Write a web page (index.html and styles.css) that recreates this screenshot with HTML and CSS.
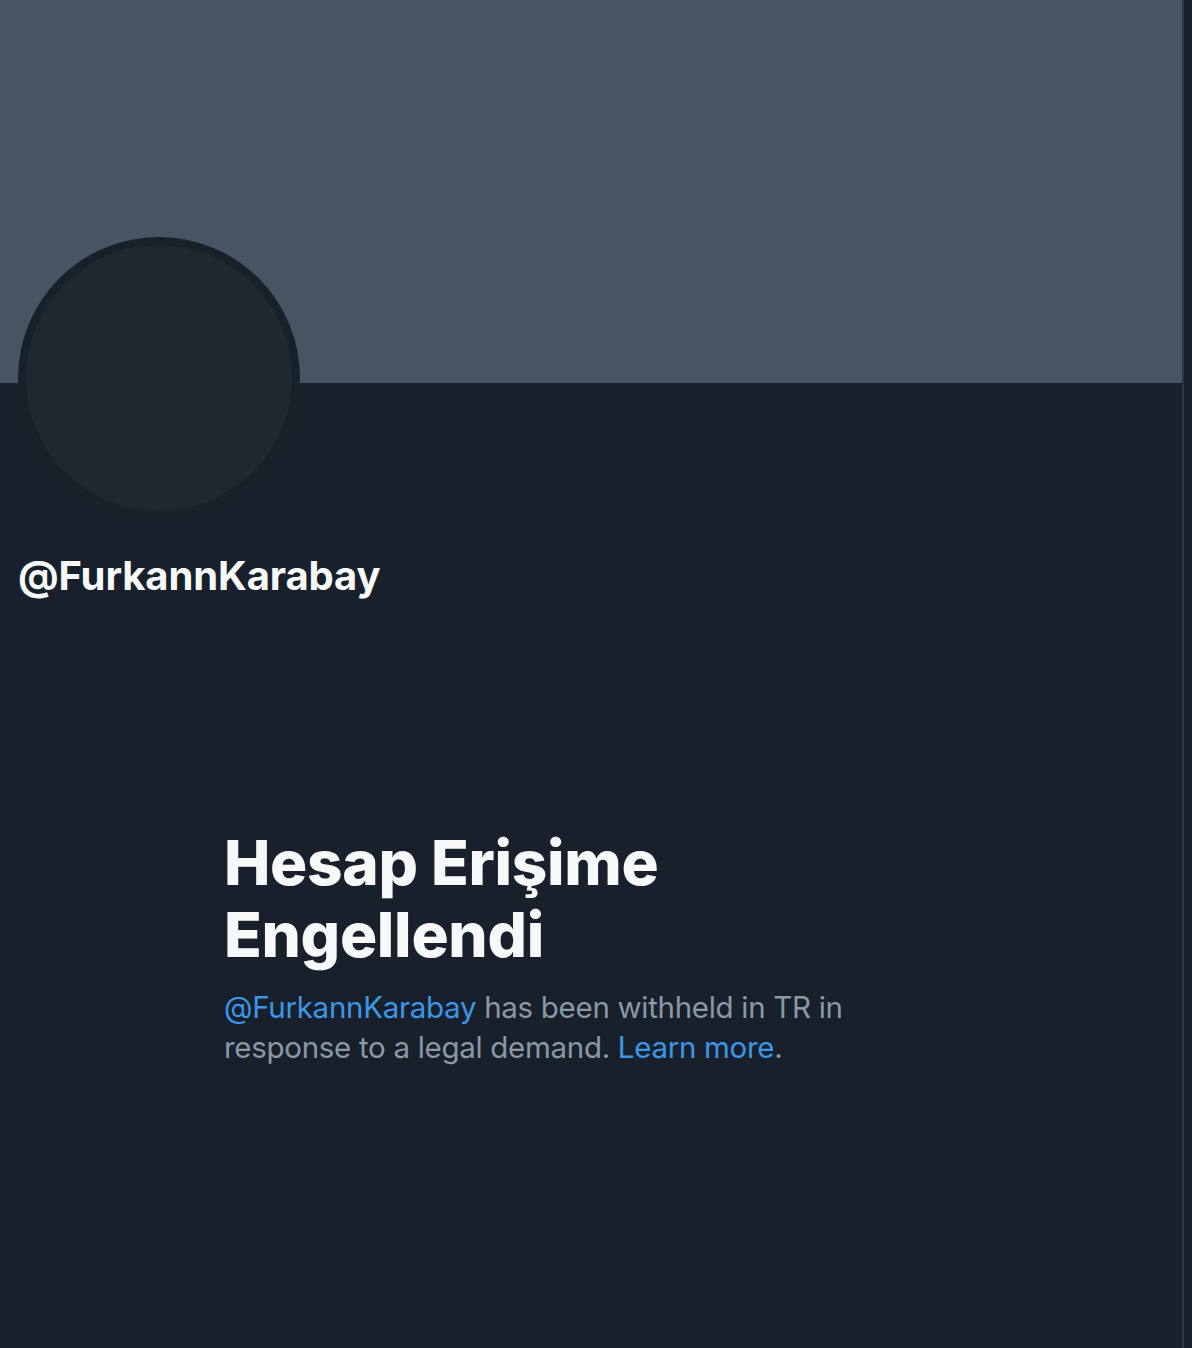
FILE: index.html
```html
<!DOCTYPE html>
<html lang="tr">
<head>
<meta charset="utf-8">
<title>@FurkannKarabay</title>
<link rel="stylesheet" href="styles.css">
</head>
<body>
<main class="column">
  <div class="banner"></div>
  <div class="profile">
    <div class="avatar"><div class="avatar-inner"></div></div>
    <h2 class="handle">@FurkannKarabay</h2>
  </div>
  <section class="withheld">
    <h1 class="title">Hesap Erişime Engellendi</h1>
    <p class="desc"><a class="link" href="#">@FurkannKarabay</a> has been withheld in TR in response to a legal demand. <a class="link" href="#">Learn more</a>.</p>
  </section>
</main>
</body>
</html>
```

FILE: styles.css
```css
html, body {
  margin: 0;
  padding: 0;
  background: #18202b;
  height: 100%;
}
body {
  font-family: Inter, "Noto Sans", "DejaVu Sans", sans-serif;
  color: #f7f9f9;
}
.column {
  width: 1182px;
  min-height: 1348px;
  border-right: 2px solid #2c3744;
  box-sizing: content-box;
}
.banner {
  height: 383px;
  background: #465464;
}
.profile {
  padding-left: 18px;
}
.avatar {
  width: 282px;
  height: 282px;
  margin-top: -146px;
  border-radius: 50%;
  background: #18202a;
  padding: 8px;
  box-sizing: border-box;
}
.avatar-inner {
  width: 100%;
  height: 100%;
  border-radius: 50%;
  background: #1f2731;
}
.handle {
  margin: 31px 0 0;
  font-size: 40px;
  line-height: 52px;
  font-weight: 700;
  letter-spacing: -0.1px;
}
.withheld {
  margin: 225px 0 0 224px;
  width: 640px;
}
.title {
  margin: 0;
  font-size: 62px;
  line-height: 72px;
  font-weight: 800;
  letter-spacing: -0.3px;
}
.desc {
  margin: 16px 0 0;
  font-size: 29.5px;
  line-height: 40px;
  color: #8b98a5;
  letter-spacing: -0.3px;
}
.link {
  color: #3b97e8;
  text-decoration: none;
}
```
